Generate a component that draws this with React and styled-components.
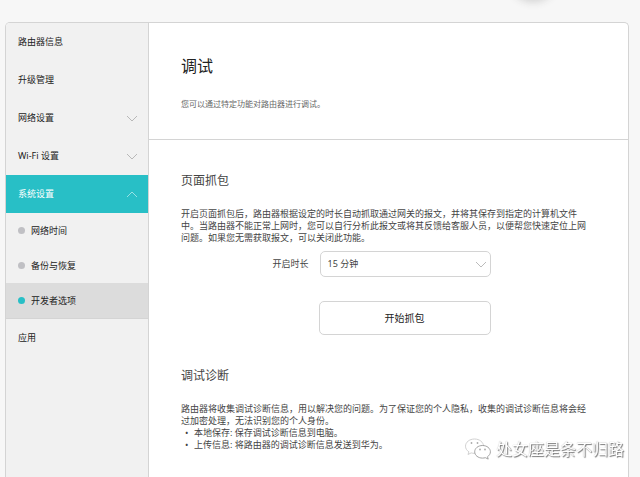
import React, { useState } from "react";
import styled, { createGlobalStyle } from "styled-components";

const MENU = [
  { name: "路由器信息" },
  { name: "升级管理" },
  { name: "网络设置", fold: true },
  { name: "Wi-Fi 设置", fold: true },
  { name: "系统设置", fold: true, sub: ["网络时间", "备份与恢复", "开发者选项"] },
  { name: "应用" },
];

function Chevron({ up, light }) {
  return (
    <ChevronIcon viewBox="0 0 12 7" aria-hidden="true" $light={light}>
      <path d={up ? "M1 6 L6 1 L11 6" : "M1 1 L6 6 L11 1"} />
    </ChevronIcon>
  );
}

function WechatLogo() {
  return (
    <LogoIcon viewBox="0 0 28 22" aria-hidden="true">
      <path d="M10.5 1C5.500 1 1.500 4.200 1.500 8.200c0 2.300 1.300 4.300 3.400 5.600L4 16.500l3.200-1.600c1 .3 2.100.5 3.300.5 5 0 9-3.200 9-7.200S15.500 1 10.500 1z" />
      <path
        className="front"
        d="M18.500 7.500c-4.400 0-7.800 2.800-7.800 6.300s3.400 6.300 7.800 6.300c1 0 2-.2 2.900-.4l2.800 1.400-.7-2.400c1.800-1.200 2.900-2.900 2.900-4.900 0-3.500-3.500-6.300-7.900-6.300z"
      />
      <g>
        <circle cx="7.500" cy="5" r="0.9" />
        <circle cx="13.500" cy="5" r="0.9" />
        <circle cx="16" cy="11.500" r="0.9" />
        <circle cx="21" cy="11.500" r="0.9" />
      </g>
    </LogoIcon>
  );
}

function App() {
  const [page, setPage] = useState("开发者选项");
  const [time, setTime] = useState("15");

  return (
    <>
      <GlobalStyle />
      <TopShadow />
      <Panel>
        <Sidebar>
          {MENU.map((menu) => (
            <React.Fragment key={menu.name}>
              <MenuButton type="button" $open={!!menu.sub}>
                <span>{menu.name}</span>
                {menu.fold && <Chevron up={!!menu.sub} light={!!menu.sub} />}
              </MenuButton>
              {menu.sub && (
                <SubMenu>
                  {menu.sub.map((name) => (
                    <SubButton
                      key={name}
                      type="button"
                      $active={page === name}
                      onClick={() => setPage(name)}
                    >
                      <Dot $active={page === name} />
                      <span>{name}</span>
                    </SubButton>
                  ))}
                </SubMenu>
              )}
            </React.Fragment>
          ))}
        </Sidebar>
        <Content>
          <ContentHeader>
            <Title>调试</Title>
            <Intro>您可以通过特定功能对路由器进行调试。</Intro>
          </ContentHeader>
          <Section>
            <SectionTitle>页面抓包</SectionTitle>
            <Text>
              开启页面抓包后，路由器根据设定的时长自动抓取通过网关的报文，并将其保存到指定的计算机文件中。当路由器不能正常上网时，您可以自行分析此报文或将其反馈给客服人员，以便帮您快速定位上网问题。如果您无需获取报文，可以关闭此功能。
            </Text>
            <Form>
              <Label htmlFor="duration">开启时长</Label>
              <SelectBox>
                <Select
                  id="duration"
                  value={time}
                  onChange={(e) => setTime(e.target.value)}
                >
                  <option value="5">5 分钟</option>
                  <option value="15">15 分钟</option>
                  <option value="30">30 分钟</option>
                </Select>
                <Chevron />
              </SelectBox>
              <StartButton type="button">开始抓包</StartButton>
            </Form>
          </Section>
          <Section>
            <SectionTitle>调试诊断</SectionTitle>
            <Text>
              路由器将收集调试诊断信息，用以解决您的问题。为了保证您的个人隐私，收集的调试诊断信息将会经过加密处理，无法识别您的个人身份。
            </Text>
            <List>
              <li>本地保存: 保存调试诊断信息到电脑。</li>
              <li>上传信息: 将路由器的调试诊断信息发送到华为。</li>
            </List>
          </Section>
        </Content>
      </Panel>
      <Watermark>
        <WechatLogo />
        <span>处女座是条不归路</span>
      </Watermark>
    </>
  );
}

export default App;

const GlobalStyle = createGlobalStyle`
  * {
    box-sizing: border-box;
  }
  body {
    margin: 0;
    background: #f7f7f7;
    color: #444;
    font-family: "Noto Sans", "Noto Sans CJK SC", sans-serif;
    font-size: 9px;
    line-height: 12px;
    overflow-x: hidden;
  }
  button, select {
    font: inherit;
    color: inherit;
  }
  h1, h2, p, ul {
    margin: 0;
    font-weight: 400;
  }
`;

const TopShadow = styled.div`
  position: absolute;
  top: -42px;
  left: calc(50% + 193px);
  width: 40px;
  height: 40px;
  border-radius: 50%;
  box-shadow: 0 1px 8px 3px #d0d0d0;
`;

const Panel = styled.div`
  display: flex;
  min-height: calc(100vh - 22px);
  margin: 22px 11px 0 5px;
  border: 1px solid #d4d4d4;
  border-bottom: none;
  border-radius: 5px 5px 0 0;
  background: #fff;
  overflow: hidden;
`;

const Sidebar = styled.nav`
  flex: none;
  width: 143px;
  border-right: 1px solid #d4d4d4;
  background: #f1f1f1;
`;

const MenuButton = styled.button`
  display: flex;
  align-items: center;
  justify-content: space-between;
  width: 100%;
  height: 38px;
  padding: 0 10px 0 12px;
  border: none;
  background: ${(props) => (props.$open ? "#28bfc6" : "transparent")};
  color: ${(props) => (props.$open ? "#fff" : "#222")};
  text-align: left;
`;

const ChevronIcon = styled.svg`
  flex: none;
  width: 12px;
  height: 7px;
  fill: none;
  stroke: ${(props) => (props.$light ? "#b4eaec" : "#aaa")};
  stroke-width: 0.8;
`;

const SubMenu = styled.div`
  border-bottom: 1px solid #d4d4d4;
`;

const SubButton = styled.button`
  display: flex;
  align-items: center;
  gap: 6px;
  width: 100%;
  height: 35px;
  padding: 0 12px;
  border: none;
  background: ${(props) => (props.$active ? "#dcdcdc" : "transparent")};
  color: #222;
`;

const Dot = styled.i`
  width: 7px;
  height: 7px;
  border-radius: 50%;
  background: ${(props) => (props.$active ? "#28bfc6" : "#c0c0c4")};
`;

const Content = styled.main`
  flex: 1;
  min-width: 0;
`;

const ContentHeader = styled.header`
  padding: 31px 32px 29px;
  border-bottom: 1px solid #d4d4d4;
`;

const Title = styled.h1`
  font-size: 16px;
  line-height: 24px;
  color: #222;
`;

const Intro = styled.p`
  margin-top: 20px;
  font-size: 8px;
  color: #666;
`;

const Section = styled.section`
  padding: 32px 0 0 32px;
`;

const SectionTitle = styled.h2`
  font-size: 12px;
  line-height: 18px;
`;

const Text = styled.p`
  padding-right: 36px;
  margin-top: 18px;
`;

const Form = styled.div`
  display: grid;
  grid-template-columns: 1fr 172px 1fr;
  align-items: center;
  gap: 24px 0;
  margin-top: 7px;
`;

const Label = styled.label`
  padding-right: 10px;
  text-align: right;
`;

const SelectBox = styled.div`
  display: grid;
  grid-template-columns: 1fr 16px;
  align-items: center;
  margin-left: 1px;

  svg {
    grid-area: 1 / 2;
    pointer-events: none;
  }
`;

const Select = styled.select`
  grid-area: 1 / 1 / 2 / 3;
  appearance: none;
  width: 100%;
  height: 26px;
  padding: 0 7px;
  border: 1px solid #d4d4d4;
  border-radius: 5px;
  background: #fff;
`;

const StartButton = styled.button`
  grid-column: 2;
  height: 34px;
  border: 1px solid #d4d4d4;
  border-radius: 5px;
  background: #fff;
  color: #222;
  font-size: 10px;
`;

const List = styled.ul`
  padding: 0 0 0 4px;
  list-style: none;

  li {
    display: flex;
  }
  li::before {
    content: "•";
    width: 9px;
  }
`;

const Watermark = styled.div`
  position: fixed;
  right: 16px;
  bottom: 16px;
  display: flex;
  align-items: center;
  gap: 4px;
  color: #fff;
  font-size: 16px;
  line-height: 24px;
  text-shadow: 1px 1px 1px #777, 0 0 1px #aaa;
`;

const LogoIcon = styled.svg`
  width: 28px;
  height: 22px;
  fill: #fff;
  stroke: #ccc;
  stroke-width: 0.9;

  .front {
    stroke: #999;
  }
  g {
    fill: #aaa;
    stroke: none;
  }
`;
